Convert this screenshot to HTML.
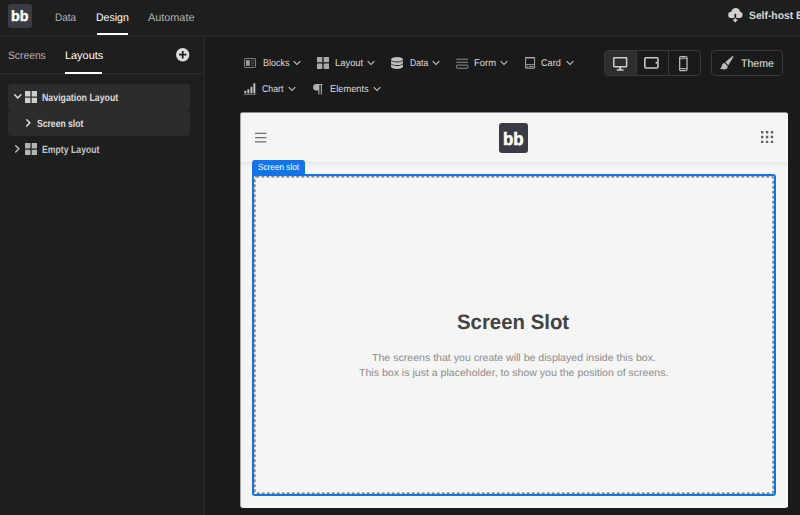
<!DOCTYPE html>
<html lang="en">
<head>
<meta charset="utf-8">
<title>Budibase Builder - Layouts</title>
<style>
*{box-sizing:border-box;margin:0;padding:0}
html,body{width:800px;height:515px;overflow:hidden;background:#1a1a1a}
body{font-family:"Liberation Sans",sans-serif;color:#c8c8c8;position:relative;-webkit-font-smoothing:antialiased;text-rendering:geometricPrecision}
.abs{position:absolute}
.t{position:absolute;white-space:nowrap;line-height:1;transform-origin:0 0}
#tBB1{-webkit-text-stroke:0.4px #fff}
#tBB2{-webkit-text-stroke:0.5px #fff}
svg{position:absolute;overflow:visible}

/* top header */
#header{left:0;top:0;width:800px;height:36px;background:#1e1e1e;border-bottom:1px solid #282828}
#logo{left:8px;top:4px;width:24px;height:24px;background:#393c44;border-radius:3px}
#tabline{left:97px;top:33px;width:31px;height:2px;background:#fff}

/* sidebar */
#sidebar{left:0;top:36px;width:205px;height:479px;background:#1e1e1e;border-right:1px solid #2b2b2b}
#sidetabs{left:0;top:36px;width:204px;height:38px;border-bottom:1px solid #2a2a2a;box-shadow:0 1px 0 #232323}
#sideline{left:65px;top:72px;width:37px;height:2px;background:#fff}
.row{left:8px;width:182px;height:26px;border-radius:4px;background:#2c2c2c}

/* toolbar */
#devgroup{left:604px;top:50px;width:97px;height:26px;border:1px solid #3a3a3a;border-radius:4px;overflow:hidden}
#devgroup i{position:absolute;top:0;height:24px;width:1px;background:#3a3a3a}
#devon{left:0;top:0;width:31px;height:24px;background:#2e2e2e}
#themebtn{left:711px;top:50px;width:72px;height:26px;border:1px solid #3a3a3a;border-radius:4px}

/* preview */
#preview{left:240px;top:112px;width:548px;height:396px;background:#f5f5f5;border-radius:3px;overflow:hidden;border-top:1px solid #8c8c8c;border-left:1px solid #a6a6a6}
#pnav{left:-1px;top:-1px;width:548px;height:51px;border-bottom:1px solid #e6e6e6;background:#f5f5f5}
#plogo{left:499px;top:123px;width:29px;height:29.5px;background:#393c44;border-radius:3px}
#slotlabel{left:252px;top:160px;width:53px;height:16px;background:#1473e6;border-radius:3px 3px 0 0}
#slot{left:252px;top:174px;width:524px;height:322px;border:2px solid #1473e6;border-radius:3px}
</style>
</head>
<body>

<!-- ===== header ===== -->
<div class="abs" id="header"></div>
<div class="abs" id="logo"></div>
<div class="abs" id="tabline"></div>
<svg id="cloud" style="left:727.5px;top:8px" width="14.6" height="14.5" viewBox="0 0 14.6 14.5"><g fill="#d2d2d2"><circle cx="3.3" cy="6.9" r="3.1"/><circle cx="7.7" cy="4.4" r="4.35"/><circle cx="11.5" cy="6.9" r="3.05"/><rect x="3.3" y="5" width="8.2" height="4.95"/></g><rect x="6.45" y="5.8" width="1.7" height="4.3" fill="#1e1e1e"/><path fill="#d2d2d2" d="M6.65 10.3h1.3v1.1h2.2L7.3 14.5 4.450 11.400h2.200z"/></svg>

<!-- ===== sidebar ===== -->
<div class="abs" id="sidebar"></div>
<div class="abs" style="left:0;top:36px;width:800px;height:1px;background:#252525"></div>
<div class="abs" id="sidetabs"></div>
<div class="abs" id="sideline"></div>
<svg style="left:176px;top:48px" width="13.4" height="13.4" viewBox="0 0 24 24"><circle cx="12" cy="12" r="12" fill="#dcdcdc"/><path d="M12 5.400v13.200M5.400 12h13.200" stroke="#1e1e1e" stroke-width="3.100" fill="none"/></svg>

<div class="abs row" style="top:84px"></div>
<div class="abs row" style="top:110px"></div>

<!-- row 1 -->
<svg style="left:13.6px;top:94.3px" width="7.6" height="4.8" viewBox="0 0 7.6 4.8"><path d="M0.7 0.7L3.8 3.9L6.9 0.7" stroke="#e6e6e6" stroke-width="1.4" fill="none" stroke-linecap="round" stroke-linejoin="round"/></svg>
<svg class="grid4" style="left:25.3px;top:90.9px" width="12" height="12" viewBox="0 0 12 12"><path fill="#cfcfcf" d="M0 0h5.400v5.500H0zM6.700 0h5.300v5.500H6.700zM0 6.800h5.400V12H0zM6.700 6.800h5.300V12H6.700z"/></svg>
<!-- row 2 -->
<svg style="left:26.4px;top:119.2px" width="4.8" height="7.6" viewBox="0 0 4.8 7.6"><path d="M0.7 0.7L3.9 3.8L0.7 6.9" stroke="#e6e6e6" stroke-width="1.4" fill="none" stroke-linecap="round" stroke-linejoin="round"/></svg>
<!-- row 3 -->
<svg style="left:14.9px;top:145.2px" width="4.8" height="7.6" viewBox="0 0 4.8 7.6"><path d="M0.7 0.7L3.9 3.8L0.7 6.9" stroke="#c0c0c0" stroke-width="1.4" fill="none" stroke-linecap="round" stroke-linejoin="round"/></svg>
<svg class="grid4" style="left:25.3px;top:142.9px" width="12" height="12" viewBox="0 0 12 12"><path fill="#b4b4b4" d="M0 0h5.400v5.500H0zM6.700 0h5.300v5.500H6.700zM0 6.800h5.400V12H0zM6.700 6.800h5.300V12H6.700z"/></svg>

<!-- ===== toolbar ===== -->

<div class="abs" id="devgroup"><div class="abs" id="devon"></div><i style="left:31px"></i><i style="left:63px"></i></div>
<div class="abs" id="themebtn"></div>

<!-- ===== preview ===== -->
<div class="abs" id="preview">
  <div class="abs" id="pnav"></div>
  <div class="abs" style="left:-1px;top:50px;width:548px;height:5px;background:linear-gradient(rgba(0,0,0,0.04),rgba(0,0,0,0))"></div>
  <div class="abs" style="left:545.8px;top:0;width:1.2px;height:396px;background:#f9f9f9"></div>
  
</div>
<div class="abs" id="slotlabel"></div>
<div class="abs" id="plogo"></div>
<div class="abs" id="slot"></div>
<svg id="slotdash" style="left:254px;top:176px" width="520" height="318" viewBox="0 0 520 318"><rect x="0.8" y="0.8" width="518.4" height="316.4" rx="1.5" fill="none" stroke="#808080" stroke-width="1.6" stroke-dasharray="3 2"/></svg>

<!-- ===== icons ===== -->
<svg style="left:244px;top:58px" width="12" height="10" viewBox="0 0 12 10"><rect x="0.5" y="0.5" width="11" height="9" rx="0.6" fill="none" stroke="#7e7e7e" stroke-width="1"/><rect x="2" y="2.1" width="3.8" height="5.700" fill="#9c9c9c"/><path d="M7.100 2.700h3.300M7.100 5h3.300M7.100 7.300h3.300" stroke="#5c5c5c" stroke-width="1.100" fill="none"/></svg>
<svg style="left:290.05px;top:55.73px" width="14" height="14" viewBox="0 0 24 24"><path fill="#c4c4c4" d="M12 13.172l4.95-4.95 1.414 1.414L12 16 5.636 9.636 7.05 8.222z"/></svg>
<svg style="left:317px;top:57.2px" width="12" height="12" viewBox="0 0 12 12"><path fill="#ababab" d="M0 0h5.300v5.200H0zM6.700 0h5.300v5.200H6.700zM0 6.600h5.300v5.300H0zM6.700 6.600h5.300v5.300H6.700z"/></svg>
<svg style="left:364.20px;top:55.73px" width="14" height="14" viewBox="0 0 24 24"><path fill="#c4c4c4" d="M12 13.172l4.95-4.95 1.414 1.414L12 16 5.636 9.636 7.05 8.222z"/></svg>
<svg style="left:391.2px;top:57.2px" width="12" height="12" viewBox="0 0 12 12"><g fill="#c0c0c0"><ellipse cx="6" cy="2.3" rx="6" ry="2.3"/><path d="M0 3.2A6 2.3 0 0 0 12 3.2v2.6A6 2.3 0 0 1 0 5.80zM0 6.7A6 2.3 0 0 0 12 6.7v2.9A6 2.3 0 0 1 0 9.60z"/></g></svg>
<svg style="left:429.30px;top:55.73px" width="14" height="14" viewBox="0 0 24 24"><path fill="#c4c4c4" d="M12 13.172l4.95-4.95 1.414 1.414L12 16 5.636 9.636 7.05 8.222z"/></svg>
<svg style="left:456px;top:58px" width="12.4" height="11" viewBox="0 0 12.4 11"><path d="M0.3 1.2h11.8M0.3 4.25h11.8" stroke="#8e8e8e" stroke-width="1" fill="none"/><rect x="0.5" y="7.1" width="11.4" height="3.2" rx="0.9" fill="none" stroke="#8e8e8e" stroke-width="1"/></svg>
<svg style="left:496.90px;top:55.73px" width="14" height="14" viewBox="0 0 24 24"><path fill="#c4c4c4" d="M12 13.172l4.95-4.95 1.414 1.414L12 16 5.636 9.636 7.05 8.222z"/></svg>
<svg style="left:524.6px;top:57.3px" width="10.2" height="11.8" viewBox="0 0 10.2 11.8"><rect x="0.55" y="0.55" width="9" height="10.6" rx="0.5" fill="none" stroke="#9c9c9c" stroke-width="1.1"/><path d="M0.500 0.800h9.100" stroke="#b0b0b0" stroke-width="1.200" fill="none"/><path d="M0.500 7.600h9.100" stroke="#9c9c9c" stroke-width="1" fill="none"/><path d="M1.800 9.500h1.100M3.800 9.500h4.600" stroke="#9c9c9c" stroke-width="0.900" fill="none"/></svg>
<svg style="left:562.50px;top:55.73px" width="14" height="14" viewBox="0 0 24 24"><path fill="#c4c4c4" d="M12 13.172l4.95-4.95 1.414 1.414L12 16 5.636 9.636 7.05 8.222z"/></svg>
<svg style="left:243.7px;top:83px" width="12.4" height="12" viewBox="0 0 12.4 12"><path fill="#c4c4c4" d="M0.4 7.8h1.9v2.4H0.4zM3.4 6.3h1.9v3.9H3.4zM6.5 3.8h1.9v6.4H6.5zM9.4 0.3h1.9v9.9H9.4z"/><path d="M0 11.3h12.3" stroke="#8a8a8a" stroke-width="0.9" fill="none"/></svg>
<svg style="left:285.40px;top:81.83px" width="14" height="14" viewBox="0 0 24 24"><path fill="#c4c4c4" d="M12 13.172l4.95-4.95 1.414 1.414L12 16 5.636 9.636 7.05 8.222z"/></svg>
<svg style="left:312.8px;top:84.4px" width="9.6" height="10.6" viewBox="0 0 9.6 10.6"><path fill="#b0b0b0" d="M3.400 0A3.300 3.300 0 0 0 3.400 6.600H5.300V10.600H6.400V0.900H7.800V10.600H8.900V0.900H9.500V0z"/></svg>
<svg style="left:369.75px;top:81.83px" width="14" height="14" viewBox="0 0 24 24"><path fill="#c4c4c4" d="M12 13.172l4.95-4.95 1.414 1.414L12 16 5.636 9.636 7.05 8.222z"/></svg>
<svg style="left:612.9px;top:56.5px" width="14.4" height="13.8" viewBox="0 0 14.4 13.8"><rect x="0.75" y="0.75" width="12.9" height="8.9" rx="0.6" fill="none" stroke="#cdcdcd" stroke-width="1.5"/><path fill="#cdcdcd" d="M6.300 10.100h1.800v2.200h2.500v1.500H3.800v-1.500h2.500z"/></svg>
<svg style="left:644px;top:57.2px" width="14.8" height="11.8" viewBox="0 0 14.8 11.8"><rect x="0.8" y="0.8" width="13.200" height="10.200" rx="1.300" fill="none" stroke="#c8c8c8" stroke-width="1.600"/><circle cx="12.400" cy="5.700" r="0.950" fill="#c8c8c8"/></svg>
<svg style="left:679.1px;top:55.5px" width="8.7" height="15.2" viewBox="0 0 8.7 15.2"><rect x="0.65" y="0.65" width="7.4" height="13.9" rx="1.2" fill="none" stroke="#b8b8b8" stroke-width="1.3"/><path d="M0.6 2.7h7.5M0.6 12.5h7.5" stroke="#b8b8b8" stroke-width="0.9" fill="none"/><path d="M3.3 1.6h2.1M3.6 13.6h1.5" stroke="#b8b8b8" stroke-width="0.7" fill="none"/></svg>
<svg style="left:720.2px;top:56.1px" width="13.4" height="13.4" viewBox="0 0 13.4 13.4"><path fill="#bcbcbc" d="M12.500 0.100C13.100-0.200 13.700 0.400 13.300 0.900L8.400 9.200 5.200 6.200zM4.500 6.900L7.600 9.900C8.100 11.900 6.400 13.400 4.200 13.400 2.400 13.400 0.900 13.200 0 12.500 1.400 11.900 1.600 10.900 1.800 9.800 2 8.100 3.100 6.900 4.500 6.900z"/></svg>
<svg style="left:255px;top:132px" width="11.4" height="11" viewBox="0 0 11.4 11"><path d="M0 1.3h11.400M0 5.600h11.400M0 9.900h11.400" stroke="#6e6e6e" stroke-width="1.3" fill="none"/></svg>
<svg style="left:760.7px;top:131.3px" width="12.2" height="12.1" viewBox="0 0 12.2 12.1"><g fill="#606060"><rect x="0.00" y="0.00" width="2.4" height="2.4" rx="0.3"/><rect x="4.90" y="0.00" width="2.4" height="2.4" rx="0.3"/><rect x="9.80" y="0.00" width="2.4" height="2.4" rx="0.3"/><rect x="0.00" y="4.80" width="2.4" height="2.4" rx="0.3"/><rect x="4.90" y="4.80" width="2.4" height="2.4" rx="0.3"/><rect x="9.80" y="4.80" width="2.4" height="2.4" rx="0.3"/><rect x="0.00" y="9.65" width="2.4" height="2.4" rx="0.3"/><rect x="4.90" y="9.65" width="2.4" height="2.4" rx="0.3"/><rect x="9.80" y="9.65" width="2.4" height="2.4" rx="0.3"/></g></svg>
<!--ENDICONS-->
<div class="t" id="tBB1" style="left:10.85px;top:10.47px;font-size:14.8px;font-weight:bold;color:#ffffff;transform:scaleX(0.9674)">bb</div>
<div class="t" id="tBB2" style="left:503.46px;top:129.76px;font-size:18.0px;font-weight:bold;color:#ffffff;transform:scaleX(0.9379)">bb</div>
<div class="t" id="tData" style="left:54.76px;top:12.77px;font-size:10.9px;font-weight:normal;color:#b4b4b4;transform:scaleX(0.9201)">Data</div>
<div class="t" id="tDesign" style="left:95.68px;top:12.77px;font-size:10.9px;font-weight:normal;color:#ffffff;transform:scaleX(0.9682)">Design</div>
<div class="t" id="tAuto" style="left:147.99px;top:12.77px;font-size:10.9px;font-weight:normal;color:#b4b4b4;transform:scaleX(0.9961)">Automate</div>
<div class="t" id="tSelf" style="left:748.97px;top:10.86px;font-size:10.8px;font-weight:bold;color:#dadada;transform:scaleX(0.9554)">Self-host Budibase</div>
<div class="t" id="tScreens" style="left:7.69px;top:50.77px;font-size:10.9px;font-weight:normal;color:#b4b4b4;transform:scaleX(0.9447)">Screens</div>
<div class="t" id="tLayouts" style="left:64.71px;top:50.77px;font-size:10.9px;font-weight:normal;color:#ffffff;transform:scaleX(1.0009)">Layouts</div>
<div class="t" id="tNav" style="left:42.03px;top:94.20px;font-size:10.4px;font-weight:bold;color:#dcdcdc;transform:scaleX(0.8470)">Navigation Layout</div>
<div class="t" id="tSlotRow" style="left:37.30px;top:120.20px;font-size:10.4px;font-weight:bold;color:#e0e0e0;transform:scaleX(0.8275)">Screen slot</div>
<div class="t" id="tEmpty" style="left:42.03px;top:146.20px;font-size:10.4px;font-weight:bold;color:#c4c4c4;transform:scaleX(0.8371)">Empty Layout</div>
<div class="t" id="tBlocks" style="left:262.55px;top:58.70px;font-size:9.8px;font-weight:normal;color:#dcdcdc;transform:scaleX(0.9219)">Blocks</div>
<div class="t" id="tLayout" style="left:335.09px;top:58.70px;font-size:9.8px;font-weight:normal;color:#dcdcdc;transform:scaleX(0.9585)">Layout</div>
<div class="t" id="tData2" style="left:409.55px;top:58.70px;font-size:9.8px;font-weight:normal;color:#dcdcdc;transform:scaleX(0.8791)">Data</div>
<div class="t" id="tForm" style="left:474.07px;top:58.70px;font-size:9.8px;font-weight:normal;color:#dcdcdc;transform:scaleX(0.9691)">Form</div>
<div class="t" id="tCard" style="left:541.39px;top:58.70px;font-size:9.8px;font-weight:normal;color:#dcdcdc;transform:scaleX(0.9305)">Card</div>
<div class="t" id="tChart" style="left:262.25px;top:84.70px;font-size:9.8px;font-weight:normal;color:#dcdcdc;transform:scaleX(0.8972)">Chart</div>
<div class="t" id="tElem" style="left:330.06px;top:84.70px;font-size:9.8px;font-weight:normal;color:#dcdcdc;transform:scaleX(0.9466)">Elements</div>
<div class="t" id="tTheme" style="left:741.11px;top:58.77px;font-size:10.9px;font-weight:normal;color:#e6e6e6;transform:scaleX(0.9660)">Theme</div>
<div class="t" id="tLabel" style="left:257.84px;top:163.38px;font-size:9.0px;font-weight:normal;color:#ffffff;transform:scaleX(0.9132)">Screen slot</div>
<div class="t" id="tH1" style="left:457.48px;top:313.39px;font-size:20.8px;font-weight:bold;color:#434343;transform:scaleX(0.9801)">Screen Slot</div>
<div class="t" id="tP1" style="left:371.73px;top:354.28px;font-size:10.3px;font-weight:normal;color:#8c8c8c;transform:scaleX(1.0271)">The screens that you create will be displayed inside this box.</div>
<div class="t" id="tP2" style="left:359.08px;top:369.28px;font-size:10.3px;font-weight:normal;color:#8c8c8c;transform:scaleX(1.0258)">This box is just a placeholder, to show you the position of screens.</div>
</body>
</html>
